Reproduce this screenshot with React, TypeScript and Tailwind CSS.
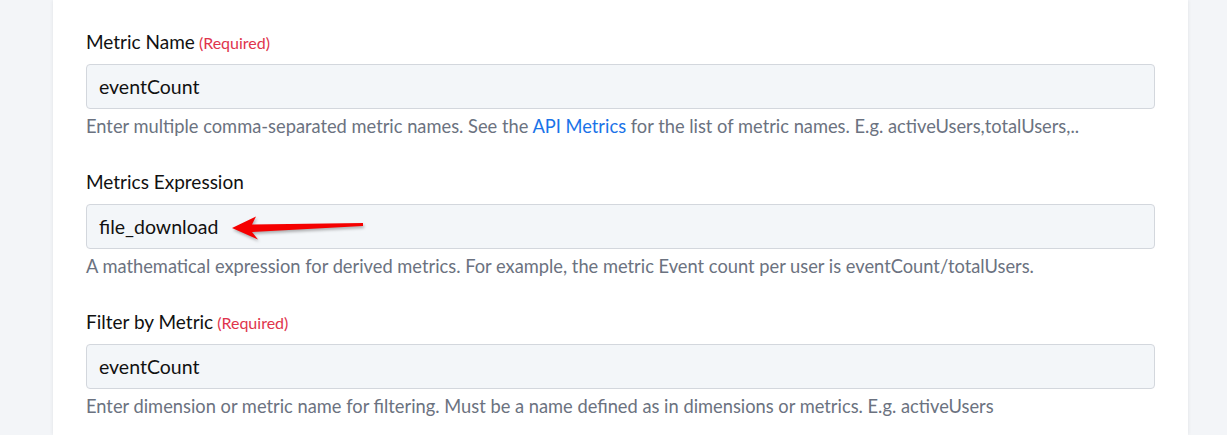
import React from 'react';

type Field = {
  label: string;
  required?: boolean;
  value: string;
  help: React.ReactNode;
  marked?: boolean;
};

const fields: Field[] = [
  {
    label: 'Metric Name',
    required: true,
    value: 'eventCount',
    help: (
      <>
        Enter multiple comma-separated metric names. See the{' '}
        <a className="text-[#1a73e8]">API Metrics</a> for the list of metric names. E.g.
        activeUsers,totalUsers,..
      </>
    ),
  },
  {
    label: 'Metrics Expression',
    value: 'file_download',
    marked: true,
    help: 'A mathematical expression for derived metrics. For example, the metric Event count per user is eventCount/totalUsers.',
  },
  {
    label: 'Filter by Metric',
    required: true,
    value: 'eventCount',
    help: 'Enter dimension or metric name for filtering. Must be a name defined as in dimensions or metrics. E.g. activeUsers',
  },
];

// red callout arrow pointing left
const Arrow = () => (
  <svg
    width="136"
    height="32"
    viewBox="0 0 136 32"
    className="absolute left-[144px] top-[8px] drop-shadow-[1px_2px_1.5px_rgba(0,0,0,0.3)]"
  >
    <path d="M2 16 L26 4.5 L22 12.5 L133 11 L133 14 L22 20 L28 27.5 Z" fill="#f50000" />
  </svg>
);

export default function App() {
  return (
    <div className="min-h-[435px] bg-[#f3f5f8] font-['Lato',sans-serif]">
      <div className="ml-[53px] w-[1135px] min-h-[435px] bg-white px-[33px] pt-[30px] shadow-[0_0_4px_rgba(0,0,0,0.08)]">
        {fields.map((f) => (
          <div key={f.label} className="mb-[32px]">
            <label className="block h-6 text-[19px] leading-6 text-[#111]">
              {f.label}
              {f.required && (
                <span className="ml-1 text-[16px] leading-none text-[#e0344c]">(Required)</span>
              )}
            </label>
            <div className="relative mt-[10px]">
              <div className="flex h-[45px] items-center rounded border border-[#d3d7dd] bg-[#f3f6f9] px-3 text-[19.5px] text-[#111]">
                {f.value}
              </div>
              {f.marked && <Arrow />}
            </div>
            <p className="mt-[5px] text-[18.3px] leading-6 text-[#6b7280]">{f.help}</p>
          </div>
        ))}
      </div>
    </div>
  );
}
